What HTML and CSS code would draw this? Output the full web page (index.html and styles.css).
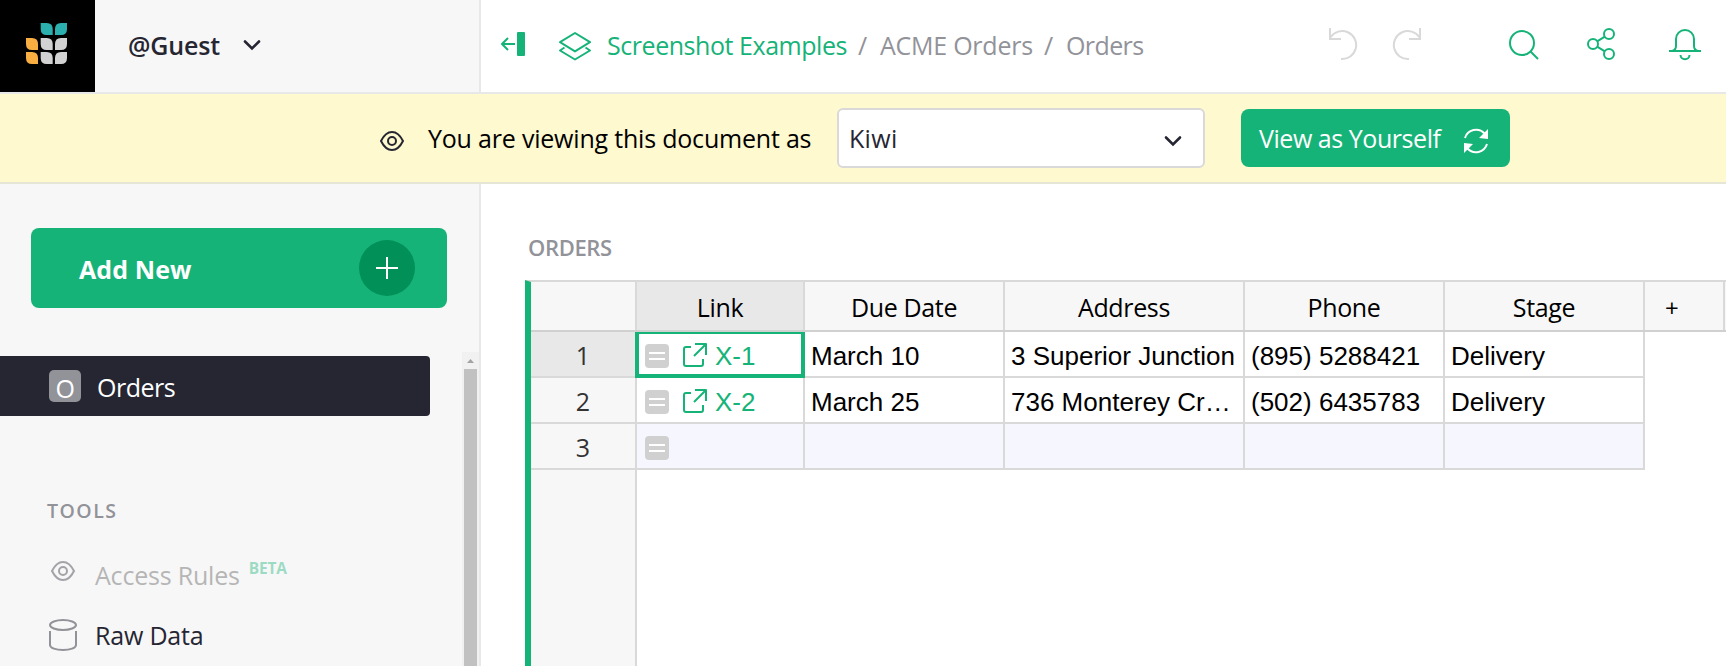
FILE: index.html
```html
<!DOCTYPE html>
<html lang="en">
<head>
    <meta charset="UTF-8">
    <meta name="viewport" content="width=device-width, initial-scale=1.0">
    <title>ACME Orders</title>
    <link rel="stylesheet" href="styles.css">
</head>
<body>
    <header class="topbar">
        <div class="org">
            <div class="logo">
                <svg width="42" height="42" viewBox="0 0 42 42">
                    <defs>
                        <path id="leaf-l" d="M0 0h6q6 0 6 6v6h-6q-6 0-6-6z"/>
                        <path id="leaf-r" d="M12 0h-6q-6 0-6 6v6h6q6 0 6-6z"/>
                    </defs>
                    <g fill="#2cb0af"><use href="#leaf-l" x="14.7"/><use href="#leaf-r" x="29"/></g>
                    <g fill="#f9ae41"><use href="#leaf-l" y="15"/><use href="#leaf-l" y="29"/></g>
                    <g fill="#d2d2d2">
                        <use href="#leaf-l" x="14.7" y="15"/><use href="#leaf-r" x="29" y="15"/>
                        <use href="#leaf-l" x="14.7" y="29"/><use href="#leaf-r" x="29" y="29"/>
                    </g>
                </svg>
            </div>
            <span class="org-name">@Guest</span>
            <svg class="org-arrow" width="18" height="12" viewBox="0 0 18 12"><path class="chevron" d="M2 2.5l7 7 7-7"/></svg>
        </div>
        <div class="doc-header">
            <svg class="panel-toggle" width="26" height="26" viewBox="0 0 26 26">
                <path class="line" d="M15 13H2M8 7l-6 6 6 6"/>
                <rect x="17" y="1" width="8" height="24" rx="1" fill="#16b378"/>
            </svg>
            <svg class="layers" width="34" height="30" viewBox="0 0 34 30">
                <path class="line" d="M17 2l15 9.2-15 9.2-15-9.2zM6.500 16.500L2 19.500l15 9 15-9-4.500-3"/>
            </svg>
            <nav class="crumbs">
                <a class="crumb-link">Screenshot Examples</a>
                <span class="slash">/</span>
                <span class="crumb-doc">ACME Orders</span>
                <span class="slash">/</span>
                <span class="crumb-page">Orders</span>
            </nav>
            <div class="actions">
                <svg class="undo" width="30" height="34" viewBox="0 0 30 34"><path class="off" d="M2 1v11h11M2.500 10.300A14 14 0 1 1 13 32"/></svg>
                <svg class="redo" width="30" height="34" viewBox="0 0 30 34"><path class="off" d="M28 1v11H17M27.500 10.300A14 14 0 1 0 17 32"/></svg>
                <svg class="search" width="32" height="32" viewBox="0 0 32 32"><path class="line" d="M23.500 23.500l7.500 7.500"/><circle class="line" cx="15" cy="15" r="12"/></svg>
                <svg class="share" width="30" height="34" viewBox="0 0 30 34">
                    <circle class="line" cx="7" cy="17" r="5"/><circle class="line" cx="23" cy="7" r="5"/><circle class="line" cx="23" cy="27" r="5"/>
                    <path class="line" d="M11.200 14.400l7.600-4.800M11.200 19.600l7.600 4.800"/>
                </svg>
                <svg class="bell" width="34" height="34" viewBox="0 0 34 34"><path class="line" d="M1 24h32M4 24q4-1 4-5v-7a9 9 0 0 1 18 0v7q0 4 4 5M12.500 28a4.500 4.200 0 0 0 9 0"/></svg>
            </div>
        </div>
    </header>

    <div class="banner">
        <svg class="banner-eye" width="26" height="22" viewBox="0 0 26 22">
            <path class="eye" d="M2 11C5 5 9 2 13 2s8 3 11 9c-3 6-7 9-11 9S5 17 2 11z"/><circle class="eye" cx="13" cy="11" r="4"/>
        </svg>
        <span class="banner-text">You are viewing this document as</span>
        <div class="select">
            <span class="select-value">Kiwi</span>
            <svg width="18" height="12" viewBox="0 0 18 12"><path class="chevron" d="M2 2.500l7 7 7-7"/></svg>
        </div>
        <button class="view-btn">
            <span>View as Yourself</span>
            <svg width="26" height="26" viewBox="0 0 26 26">
                <path d="M2 10A11.500 11.500 0 0 1 21.500 5.500M24 16A11.500 11.500 0 0 1 4.500 20.500" fill="none" stroke="#fff" stroke-width="2"/>
                <path d="M25 1v10l-9-1zM1 25V15l9 1z" fill="#fff"/>
            </svg>
        </button>
    </div>

    <div class="content">
        <aside class="sidebar">
            <button class="add-new">
                <span class="add-label">Add New</span>
                <span class="add-plus"><svg width="22" height="22" viewBox="0 0 22 22"><path d="M11 0v22M0 11h22" stroke="#fff" stroke-width="2"/></svg></span>
            </button>
            <div class="side-scroll">
                <div class="side-list">
                    <div class="page-item">
                        <span class="page-badge">O</span>
                        <span class="page-name">Orders</span>
                    </div>
                    <div class="tools-title">TOOLS</div>
                    <div class="tool disabled">
                        <svg width="28" height="22" viewBox="-1 0 28 22">
                            <path class="eye" d="M2 11C5 5 9 2 13 2s8 3 11 9c-3 6-7 9-11 9S5 17 2 11z"/><circle class="eye" cx="13" cy="11" r="4"/>
                        </svg>
                        <span>Access Rules</span>
                        <span class="beta">BETA</span>
                    </div>
                    <div class="tool">
                        <svg width="28" height="32" viewBox="0 0 28 32">
                            <ellipse class="grey" cx="14" cy="6" rx="13" ry="5"/><path class="grey" d="M1 12v14c0 3 6 5 13 5s13-2 13-5V12"/>
                        </svg>
                        <span>Raw Data</span>
                    </div>
                </div>
                <div class="scrollbar">
                    <svg width="7" height="4" viewBox="0 0 7 4"><path d="M3.500 0L7 4H0z" fill="#a3a3a3"/></svg>
                    <div class="thumb"></div>
                </div>
            </div>
        </aside>

        <main class="main">
            <div class="section-title">ORDERS</div>
            <div class="grid">
                <div class="row head">
                    <div class="num"></div>
                    <div class="cell c-link active">Link</div>
                    <div class="cell c-mid">Due Date</div>
                    <div class="cell c-addr">Address</div>
                    <div class="cell c-mid">Phone</div>
                    <div class="cell c-mid">Stage</div>
                    <div class="cell c-add">+</div>
                </div>
                <div class="row">
                    <div class="num active">1</div>
                    <div class="cell c-link cursor">
                        <svg class="note" width="24" height="24" viewBox="0 0 24 24"><rect width="24" height="24" rx="4" fill="#d0d0d0"/><path d="M4 9h16M4 15h16" stroke="#fff" stroke-width="2"/></svg>
                        <svg class="open" width="26" height="26" viewBox="0 0 26 26"><path class="line" d="M9 5H4a2 2 0 0 0-2 2v15a2 2 0 0 0 2 2h15a2 2 0 0 0 2-2v-5M13 2h11v11M24 2L12 14"/></svg>
                        <a>X-1</a>
                    </div>
                    <div class="cell c-mid">March 10</div>
                    <div class="cell c-addr"><span class="clip">3 Superior Junction</span></div>
                    <div class="cell c-mid">(895) 5288421</div>
                    <div class="cell c-mid">Delivery</div>
                </div>
                <div class="row">
                    <div class="num">2</div>
                    <div class="cell c-link">
                        <svg class="note" width="24" height="24" viewBox="0 0 24 24"><rect width="24" height="24" rx="4" fill="#d0d0d0"/><path d="M4 9h16M4 15h16" stroke="#fff" stroke-width="2"/></svg>
                        <svg class="open" width="26" height="26" viewBox="0 0 26 26"><path class="line" d="M9 5H4a2 2 0 0 0-2 2v15a2 2 0 0 0 2 2h15a2 2 0 0 0 2-2v-5M13 2h11v11M24 2L12 14"/></svg>
                        <a>X-2</a>
                    </div>
                    <div class="cell c-mid">March 25</div>
                    <div class="cell c-addr"><span class="clip">736 Monterey Cr…</span></div>
                    <div class="cell c-mid">(502) 6435783</div>
                    <div class="cell c-mid">Delivery</div>
                </div>
                <div class="row new">
                    <div class="num">3</div>
                    <div class="cell c-link">
                        <svg class="note" width="24" height="24" viewBox="0 0 24 24"><rect width="24" height="24" rx="4" fill="#d0d0d0"/><path d="M4 9h16M4 15h16" stroke="#fff" stroke-width="2"/></svg>
                    </div>
                    <div class="cell c-mid"></div>
                    <div class="cell c-addr"></div>
                    <div class="cell c-mid"></div>
                    <div class="cell c-mid"></div>
                </div>
                <div class="gutter"></div>
            </div>
        </main>
    </div>
</body>
</html>
```
FILE: styles.css
```css
* {
    box-sizing: border-box;
}
body {
    margin: 0;
    height: 666px;
    overflow: hidden;
    display: flex;
    flex-direction: column;
    font-family: "Open Sans", "Noto Sans", sans-serif;
    font-size: 25px;
    line-height: 34px;
    letter-spacing: -0.35px;
    color: #262633;
    background: #fff;
    white-space: nowrap;
}
svg {
    display: block;
    flex: none;
}
button {
    font: inherit;
    letter-spacing: inherit;
    border: none;
    color: #fff;
    background: #16b378;
    border-radius: 8px;
    display: flex;
    align-items: center;
}
.line {
    fill: none;
    stroke: #16b378;
    stroke-width: 2;
    stroke-linejoin: round;
}
.off {
    fill: none;
    stroke: #d9d9d9;
    stroke-width: 2;
}
.grey {
    fill: none;
    stroke: #929299;
    stroke-width: 2;
}
.eye {
    fill: none;
    stroke: #262633;
    stroke-width: 2;
}
.chevron {
    fill: none;
    stroke: #262633;
    stroke-width: 2.6;
    stroke-linecap: round;
}

/* top bar */
.topbar {
    display: flex;
    height: 94px;
    border-bottom: 2px solid #e8e8e8;
}
.org {
    width: 481px;
    border-right: 2px solid #e8e8e8;
    background: #f7f7f7;
    display: flex;
    align-items: center;
}
.logo {
    width: 95px;
    height: 92px;
    padding: 23px 0 0 26px;
    background: #000;
}
.org-name {
    margin-left: 33px;
    width: 114px;
    padding-bottom: 2px;
    font-weight: 600;
    letter-spacing: -0.15px;
}
.org-arrow {
    margin-left: 1px;
    margin-bottom: 3px;
}
.doc-header {
    flex: 1;
    display: flex;
    align-items: center;
}
.panel-toggle {
    margin-left: 19px;
    margin-bottom: 4px;
}
.layers {
    margin-left: 32px;
}
.crumbs {
    display: flex;
    margin-left: 15px;
    padding-bottom: 3px;
    color: #929299;
}
.crumb-link {
    color: #16b378;
    width: 251px;
    letter-spacing: -0.45px;
}
.slash {
    width: 22px;
}
.crumb-doc {
    width: 164px;
    letter-spacing: -0.25px;
}
.crumb-page {
    letter-spacing: -0.6px;
}
.actions {
    display: flex;
    align-items: center;
    margin-left: auto;
    padding-bottom: 4px;
}
.redo {
    margin-left: 34px;
}
.search {
    margin-left: 85px;
}
.share {
    margin-left: 47px;
}
.bell {
    margin: 0 24px 0 52px;
}

/* view-as banner */
.banner {
    display: flex;
    align-items: center;
    height: 90px;
    padding-left: 379px;
    background: #fef9cf;
    border-bottom: 2px solid #e6e6d6;
}
.banner-eye {
    margin-top: 6px;
}
.banner-text {
    margin-left: 23px;
    width: 409px;
    padding-bottom: 1px;
    letter-spacing: -0.2px;
    color: #000;
}
.select {
    width: 368px;
    height: 60px;
    padding: 0 21px 0 10px;
    display: flex;
    align-items: center;
    justify-content: space-between;
    background: #fff;
    border: 2px solid #d9d9d9;
    border-radius: 6px;
}
.select-value {
    font-weight: 500;
    letter-spacing: 0.3px;
}
.select svg {
    margin-top: 5px;
}
.view-btn {
    width: 269px;
    height: 58px;
    margin-left: 36px;
    padding: 0 21px 1px 18px;
    justify-content: space-between;
    letter-spacing: -0.45px;
}
.view-btn svg {
    margin-top: 7px;
}

/* left panel */
.content {
    flex: 1;
    display: flex;
    min-height: 0;
}
.sidebar {
    width: 481px;
    border-right: 2px solid #e8e8e8;
    background: #f7f7f7;
    display: flex;
    flex-direction: column;
}
.add-new {
    flex: none;
    width: 416px;
    height: 80px;
    margin: 44px 0 0 31px;
    padding: 0 32px 0 48px;
    justify-content: space-between;
    font-weight: 700;
}
.add-label {
    padding-top: 2px;
    letter-spacing: 0.1px;
}
.add-plus {
    width: 56px;
    height: 56px;
    border-radius: 50%;
    background: #009058;
    display: flex;
    align-items: center;
    justify-content: center;
}
.side-scroll {
    flex: 1;
    display: flex;
    margin-top: 44px;
    min-height: 0;
}
.side-list {
    width: 462px;
    padding-top: 4px;
}
.page-item {
    width: 430px;
    height: 60px;
    padding-left: 49px;
    display: flex;
    align-items: center;
    color: #fff;
    background: #262633;
    border-radius: 0 4px 4px 0;
}
.page-badge {
    width: 32px;
    height: 32px;
    margin: 0 16px 0 0;
    line-height: 37px;
    text-align: center;
    background: #929299;
    border-radius: 5px;
}
.page-name {
    padding-top: 2px;
    letter-spacing: -0.5px;
}
.tools-title {
    margin: 80px 0 0 47px;
    line-height: 30px;
    font-size: 19.5px;
    font-weight: 600;
    letter-spacing: 1.5px;
    color: #929299;
}
.tool {
    display: flex;
    align-items: center;
    height: 60px;
    padding-left: 49px;
}
.tool span {
    margin-left: 18px;
    letter-spacing: -0.2px;
}
.tool.disabled {
    margin-top: 19px;
    opacity: 0.4;
    color: #555;
}
.disabled svg {
    margin-bottom: 8px;
}
.tool .beta {
    margin: 0 0 14px 9px;
    font-size: 15.5px;
    font-weight: 700;
    color: #16b378;
}
.scrollbar {
    width: 17px;
    background: #f1f1f1;
    display: flex;
    flex-direction: column;
    align-items: center;
    padding-top: 7px;
}
.thumb {
    flex: 1;
    width: 13px;
    margin-top: 6px;
    background: #c1c1c1;
}

/* table */
.main {
    flex: 1;
    min-width: 0;
    display: flex;
    flex-direction: column;
    padding: 46px 0 0 44px;
}
.section-title {
    margin: 0 0 16px 3px;
    font-size: 22px;
    font-weight: 600;
    color: #929299;
}
.grid {
    flex: 1;
    display: flex;
    flex-direction: column;
    border-left: 6px solid #16b378;
    border-top: 2px solid #d9d9d9;
}
.row {
    display: flex;
    flex: none;
    height: 46px;
    font-family: "Liberation Sans", Arial, sans-serif;
    font-size: 26px;
    letter-spacing: 0;
    color: #000;
}
.head {
    height: 50px;
    font-family: "Open Sans", "Noto Sans", sans-serif;
    font-size: 25px;
    letter-spacing: -0.35px;
    background: #f7f7f7;
    border-bottom: 2px solid #d0d0d0;
}
.num {
    width: 106px;
    padding-top: 1px;
    border-right: 2px solid #d9d9d9;
    border-bottom: 2px solid #d9d9d9;
    background: #f7f7f7;
    font-family: "Open Sans", "Noto Sans", sans-serif;
    font-size: 25px;
    color: #333;
    display: flex;
    align-items: center;
    justify-content: center;
}
.num.active, .head .active {
    background: #e8e8e8;
}
.cell {
    display: flex;
    align-items: center;
    padding: 4px 0 0 6px;
    border-right: 2px solid #d9d9d9;
    border-bottom: 2px solid #d9d9d9;
}
.head .cell, .head .num {
    justify-content: center;
    padding: 1px 0 0;
    border-bottom: none;
}
.c-link { width: 168px; }
.c-mid { width: 200px; }
.c-addr { width: 240px; }
.c-add { width: 80px; }
.head .c-add {
    justify-content: flex-start;
    padding: 3px 0 0 20px;
    font-size: 24px;
}
.clip {
    overflow: hidden;
    text-overflow: ellipsis;
}
.row a {
    color: #16b378;
}
.note {
    margin: 0 13px 0 2px;
}
.open {
    margin: 0 7px 2px 0;
}
/* selected cell outline */
.cursor {
    position: relative;
}
.cursor::after {
    content: "";
    position: absolute;
    top: 0;
    left: -2px;
    right: -2px;
    bottom: -2px;
    border: 4px solid #16b378;
    border-top-width: 2px;
}
.new .cell {
    background: #f6f6ff;
}
.gutter {
    flex: 1;
    width: 106px;
    background: #f7f7f7;
    border-right: 2px solid #d9d9d9;
}
```
